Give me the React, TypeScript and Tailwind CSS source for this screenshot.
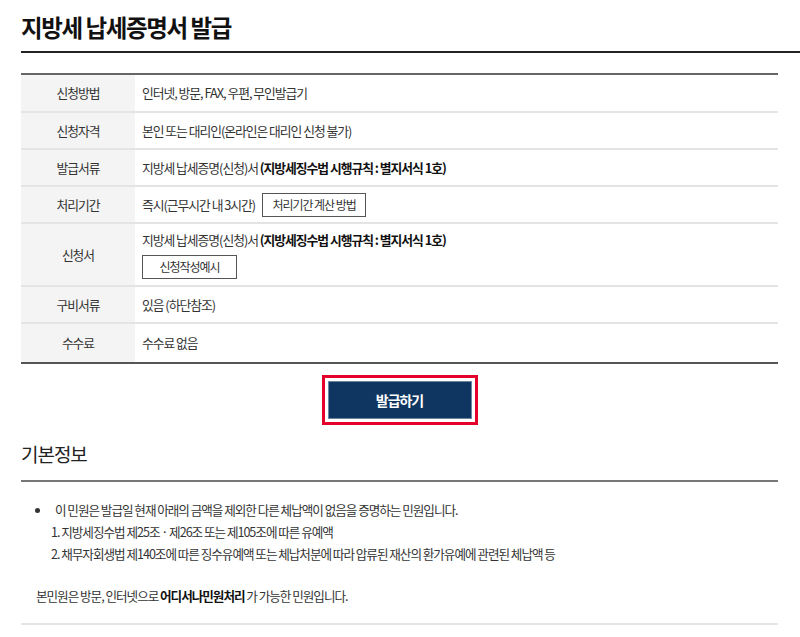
import { FC, ReactNode } from "react"

const font = { fontFamily: '"Noto Sans CJK KR", "Noto Sans", sans-serif' }

interface RowProps {
  label: string
  children: ReactNode
  h?: string
}

const Row: FC<RowProps> = ({ label, children, h = "h-[37px]" }) => (
  <div className={`flex border-b-2 border-[#e4e4e4] last:border-b-0 ${h}`}>
    <div className="w-[114px] shrink-0 bg-[#f4f4f4] flex items-center justify-center text-[#333]">{label}</div>
    <div className="flex-1 flex flex-col justify-center pl-[7px] text-[#333]">{children}</div>
  </div>
)

export default function App() {
  return (
    <div className="w-[800px] h-[637px] bg-white overflow-hidden text-[12.8px] tracking-[-0.08em]" style={font}>
      <div className="pl-[21px]">
        <h1 className="pt-[12px] pb-[9px] text-[23.5px] font-bold text-[#111] leading-[30px] tracking-[-0.06em]">지방세 납세증명서 발급</h1>
        <div className="h-[2px] bg-[#222]" />
      </div>

      <div className="px-[21px] mr-[1px]">
        <div className="mt-[20px] border-t-2 border-b-2 border-t-[#666] border-b-[#555]">
          <Row label="신청방법" h="h-[38px]">인터넷, 방문, FAX, 우편, 무인발급기</Row>
          <Row label="신청자격">본인 또는 대리인(온라인은 대리인 신청 불가)</Row>
          <Row label="발급서류">
            <span>지방세 납세증명(신청)서 <b className="font-bold text-[#111]">(지방세징수법 시행규칙 : 별지서식 1호)</b></span>
          </Row>
          <Row label="처리기간">
            <div className="flex items-center gap-[7px]">
              <span>즉시(근무시간 내 3시간)</span>
              <button className="h-[24px] w-[104px] border border-[#555] bg-white text-[12px] text-[#333] leading-none">처리기간 계산 방법</button>
            </div>
          </Row>
          <Row label="신청서" h="h-[63px]">
            <span>지방세 납세증명(신청)서 <b className="font-bold text-[#111]">(지방세징수법 시행규칙 : 별지서식 1호)</b></span>
            <div className="mt-[6px]">
              <button className="h-[24px] w-[95px] border border-[#555] bg-white text-[12px] text-[#333] leading-none">신청작성예시</button>
            </div>
          </Row>
          <Row label="구비서류">있음 (하단참조)</Row>
          <Row label="수수료" h="h-[38px]">수수료 없음</Row>
        </div>

        <div className="flex justify-center mt-[11px]">
          <div className="border-[3px] border-[#e4002b] p-[3px]">
            <button className="w-[144px] h-[38px] bg-[#0f3660] border border-[#6b86a3] text-white text-[14px] font-bold">발급하기</button>
          </div>
        </div>

        <h2 className="mt-[16px] text-[19px] text-[#222] leading-[26px]">기본정보</h2>
        <div className="mt-[13px] h-[2px] bg-[#777]" />

        <div className="pt-[18px] text-[#333] text-[12.6px]">
          <div className="flex items-center pl-[14px] h-[20px]">
            <span className="w-[5px] h-[5px] rounded-full bg-[#333] mr-[15px]" />
            <span>이 민원은 발급일 현재 아래의 금액을 제외한 다른 체납액이 없음을 증명하는 민원입니다.</span>
          </div>
          <div className="pl-[30px] mt-[1px] leading-[22px]">
            <p>1. 지방세징수법 제25조 · 제26조 또는 제105조에 따른 유예액</p>
            <p>2. 채무자회생법 제140조에 따른 징수유예액 또는 체납처분에 따라 압류된 재산의 환가유예에 관련된 체납액 등</p>
          </div>
          <p className="pl-[15px] mt-[20px] leading-[22px]">
            본민원은 방문, 인터넷으로 <b className="font-bold text-[#111]">어디서나민원처리</b> 가 가능한 민원입니다.
          </p>
        </div>
        <div className="mt-[16px] h-[2px] bg-[#e4e4e4]" />
      </div>
    </div>
  )
}
